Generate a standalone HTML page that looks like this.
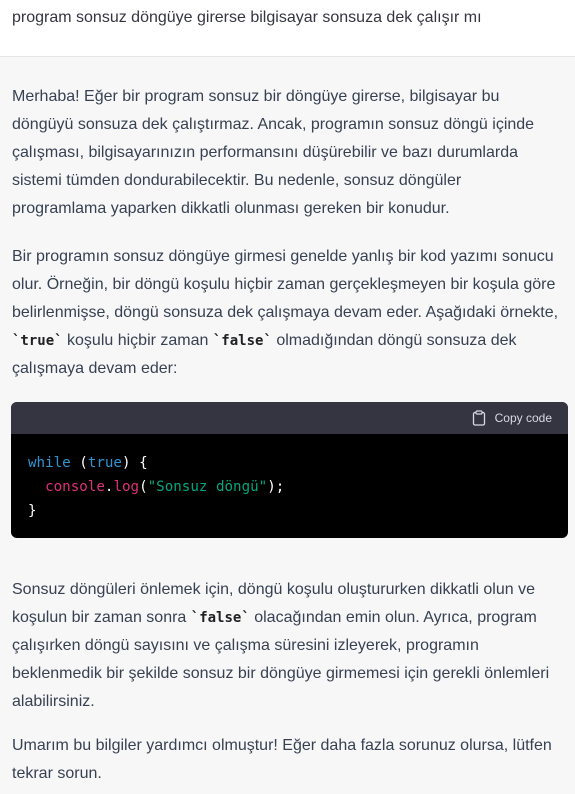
<!DOCTYPE html>
<html><head><meta charset="utf-8"><style>
body{margin:0;width:575px;height:794px;overflow:hidden;background:#f7f7f8;font-family:"Liberation Sans",sans-serif;color:#374151;font-size:16px;}
.top{background:#fff;height:57px;border-bottom:1px solid #e5e5e5;box-sizing:border-box;padding:6px 12px;line-height:24px;color:#343541}
.c{padding:0 12px;line-height:28px}
p{margin:0}
code{font-family:"DejaVu Sans Mono",monospace;font-size:14px;font-weight:bold;color:#202123}
.blk{position:absolute;left:11px;top:402px;width:557px;height:136px;background:#000;border-radius:6px;overflow:hidden}
.hd{height:32px;background:#343541;color:#d9d9e3;font-size:12px;display:flex;justify-content:flex-end;align-items:center;padding-right:16px}
pre{margin:0;padding:17px 17px 13px;font-family:"DejaVu Sans Mono",monospace;font-size:14.2px;line-height:24px;color:#fff}
.k{color:#2e95d3}.r{color:#df3079}.g{color:#00a67d}
</style></head><body>
<div class="top">program sonsuz döngüye girerse bilgisayar sonsuza dek çalışır mı</div>
<div class="c">
<p style="position:absolute;top:83px;left:12px;width:525px">Merhaba! Eğer bir program sonsuz bir döngüye girerse, bilgisayar bu döngüyü sonsuza dek çalıştırmaz. Ancak, programın sonsuz döngü içinde çalışması, bilgisayarınızın performansını düşürebilir ve bazı durumlarda sistemi tümden dondurabilecektir. Bu nedenle, sonsuz döngüler programlama yaparken dikkatli olunması gereken bir konudur.</p>
<p style="position:absolute;top:243px;left:12px;width:560px">Bir programın sonsuz döngüye girmesi genelde yanlış bir kod yazımı sonucu olur. Örneğin, bir döngü koşulu hiçbir zaman gerçekleşmeyen bir koşula göre belirlenmişse, döngü sonsuza dek çalışmaya devam eder. Aşağıdaki örnekte, <code>`true`</code> koşulu hiçbir zaman <code>`false`</code> olmadığından döngü sonsuza dek çalışmaya devam eder:</p>
<div class="blk"><div class="hd"><svg width="14" height="16" viewBox="0 0 14 16" style="margin-right:9px"><rect x="1.5" y="2.5" width="11" height="12.5" rx="1.5" fill="none" stroke="#d9d9e3" stroke-width="1.3"/><rect x="4" y="1" width="6" height="3" rx="1" fill="#343541" stroke="#d9d9e3" stroke-width="1.2"/></svg>Copy code</div>
<pre><span class="k">while</span> (<span class="k">true</span>) {
  <span class="r">console</span>.<span class="r">log</span>(<span class="g">"Sonsuz döngü"</span>);
}</pre></div>
<p style="position:absolute;top:576px;left:12px;width:555px">Sonsuz döngüleri önlemek için, döngü koşulu oluştururken dikkatli olun ve koşulun bir zaman sonra <code>`false`</code> olacağından emin olun. Ayrıca, program çalışırken döngü sayısını ve çalışma süresini izleyerek, programın beklenmedik bir şekilde sonsuz bir döngüye girmemesi için gerekli önlemleri alabilirsiniz.</p>
<p style="position:absolute;top:732px;left:12px;width:555px">Umarım bu bilgiler yardımcı olmuştur! Eğer daha fazla sorunuz olursa, lütfen tekrar sorun.</p>
</div>
</body></html>
